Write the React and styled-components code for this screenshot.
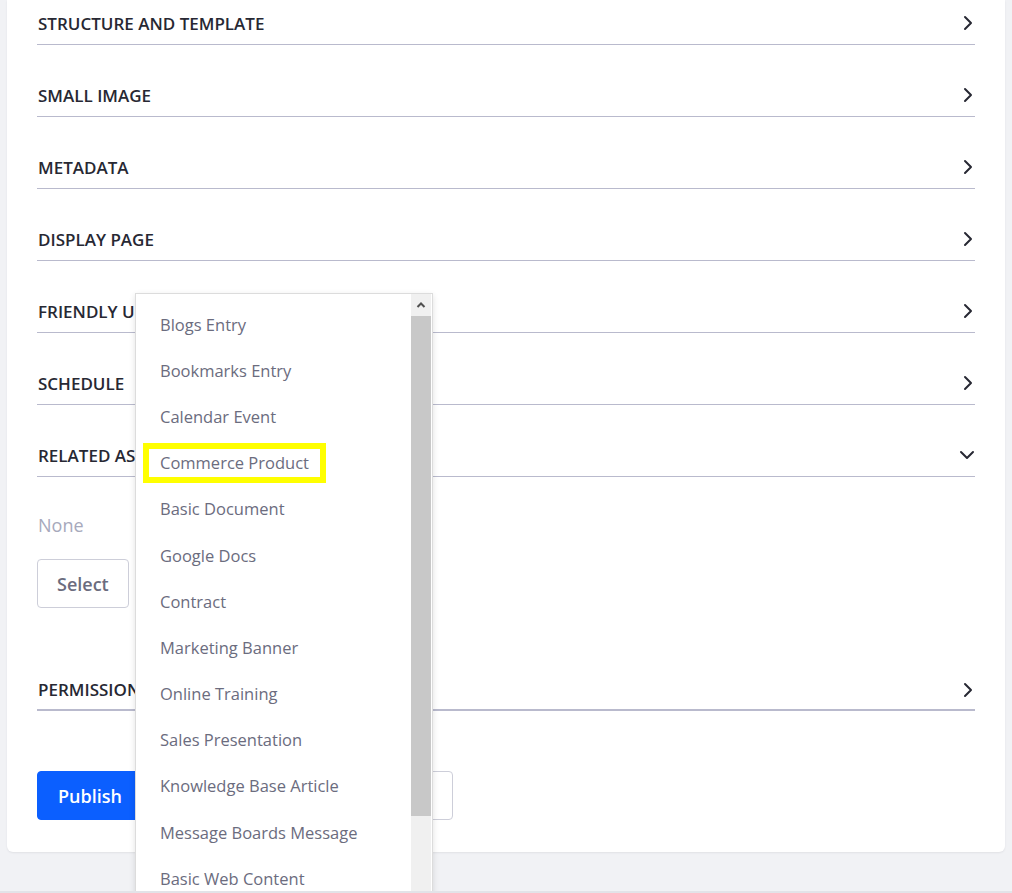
import React from 'react';
import styled, { createGlobalStyle } from 'styled-components';

const GlobalStyle = createGlobalStyle`
  html, body {
    margin: 0;
    padding: 0;
    background: #f1f2f5;
    font-family: 'Open Sans', 'Noto Sans', sans-serif;
  }
`;

const Page = styled.div`
  position: relative;
  height: 893px;
  overflow: hidden;
  padding: 0 7px;
  box-sizing: border-box;
  border-bottom: 2px solid #e2e3e8;
`;

const Card = styled.div`
  background: #ffffff;
  border-radius: 0 0 6px 6px;
  box-shadow: 0 1px 2px rgba(39, 40, 51, 0.08);
  padding: 2px 30px 32px 30px;
`;

const Panel = styled.div`
  margin-bottom: 29px;
`;

const Header = styled.div`
  display: flex;
  align-items: center;
  justify-content: space-between;
  height: 43px;
  border-bottom: ${(p) => (p.$thick ? '2px' : '1px')} solid #b9bacd;
  box-sizing: border-box;
  color: #272833;
  font-size: 17px;
  font-weight: 600;
  text-transform: uppercase;
  padding: ${(p) => (p.$thick ? '2px' : '0')} 0 0 1px;
`;

const Chevron = ({ down }) => (
  <svg width="16" height="16" viewBox="0 0 16 16" fill="none">
    <path
      d={down ? 'M2 5l6 6 6-6' : 'M6 2l6 6-6 6'}
      stroke="#272833"
      strokeWidth="2"
      strokeLinecap="round"
      strokeLinejoin="round"
    />
  </svg>
);

const Body = styled.div`
  padding-top: 35px;
  padding-bottom: 60px;
`;

const Empty = styled.div`
  color: #a7a9bc;
  font-size: 18px;
  line-height: 26px;
  padding-left: 1px;
  margin-bottom: 21px;
`;

const Button = styled.button`
  font-family: inherit;
  font-size: 18px;
  font-weight: 600;
  height: 49px;
  border-radius: 4px;
  padding: 0 ${(p) => p.$pad || 20}px;
  cursor: pointer;
  border: 1px solid ${(p) => (p.$primary ? '#0b5fff' : '#cdced9')};
  background: ${(p) => (p.$primary ? '#0b5fff' : '#ffffff')};
  color: ${(p) => (p.$primary ? '#ffffff' : '#6b6c7e')};
`;

const Actions = styled.div`
  display: flex;
  gap: 16px;
  padding-top: 60px;
`;

const Listbox = styled.div`
  position: absolute;
  left: 135px;
  top: 293px;
  width: 298px;
  height: 640px;
  background: #ffffff;
  border: 1px solid #dcdcdc;
  box-shadow: 0 2px 6px rgba(0, 0, 0, 0.12);
  display: flex;
  box-sizing: border-box;
`;

const Options = styled.ul`
  list-style: none;
  margin: 0;
  padding: 7px 0 0 24px;
  flex: 1;
`;

const Option = styled.li`
  height: 46.2px;
  display: flex;
  align-items: center;
  color: #6b6c7e;
  font-size: 16.5px;
`;

const Marked = styled.span`
  display: inline-block;
  border: 6px solid #ffff00;
  padding: 0 11px;
  margin-left: -17px;
  line-height: 28px;
`;

const Scrollbar = styled.div`
  width: 20px;
  margin-right: 1px;
  background: #f0f0f0;
  display: flex;
  flex-direction: column;
`;

const ScrollUp = styled.div`
  height: 22px;
  display: flex;
  align-items: center;
  justify-content: center;
`;

const Thumb = styled.div`
  height: 500px;
  background: #c8c8c8;
`;

const sections = [
  'Structure and Template',
  'Small Image',
  'Metadata',
  'Display Page',
  'Friendly URL',
  'Schedule',
];

const options = [
  'Blogs Entry',
  'Bookmarks Entry',
  'Calendar Event',
  'Commerce Product',
  'Basic Document',
  'Google Docs',
  'Contract',
  'Marketing Banner',
  'Online Training',
  'Sales Presentation',
  'Knowledge Base Article',
  'Message Boards Message',
  'Basic Web Content',
];

export default function App() {
  return (
    <>
      <GlobalStyle />
      <Page>
        <Card>
          {sections.map((s) => (
            <Panel key={s}>
              <Header>
                <span>{s}</span>
                <Chevron />
              </Header>
            </Panel>
          ))}
          <Header>
            <span>Related Assets</span>
            <Chevron down />
          </Header>
          <Body>
            <Empty>None</Empty>
            <Button $pad={19}>Select</Button>
          </Body>
          <Header $thick>
            <span>Permissions</span>
            <Chevron />
          </Header>
          <Actions>
            <Button $primary>Publish</Button>
            <Button $pad={89}>Save as Draft</Button>
          </Actions>
        </Card>
        <Listbox>
          <Options>
            {options.map((o) => (
              <Option key={o}>
                {o === 'Commerce Product' ? <Marked>{o}</Marked> : o}
              </Option>
            ))}
          </Options>
          <Scrollbar>
            <ScrollUp>
              <svg width="10" height="8" viewBox="0 0 10 8">
                <path d="M1.5 6L5 2.5 8.5 6" stroke="#505050" strokeWidth="2" fill="none" />
              </svg>
            </ScrollUp>
            <Thumb />
          </Scrollbar>
        </Listbox>
      </Page>
    </>
  );
}
